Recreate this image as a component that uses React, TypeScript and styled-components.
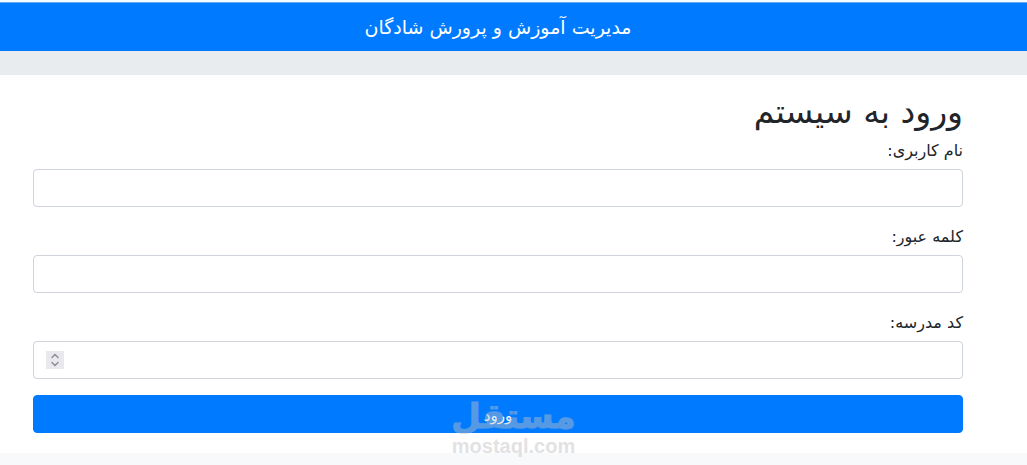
import React from "react";
import styled, { createGlobalStyle } from "styled-components";

const GlobalStyle = createGlobalStyle`
  *, *::before, *::after { box-sizing: border-box; }
  body {
    margin: 0;
    background: #f8f9fa;
    color: #212529;
    font-family: Tahoma, "DejaVu Sans", sans-serif;
    font-size: 16px;
    line-height: 24px;
  }
`;

const Page = styled.div`
  direction: rtl;
  padding-bottom: 12px;
  border-top: 2px solid #f4fcff;
`;

const Header = styled.header`
  display: flex;
  justify-content: center;
  padding: 9px 64px 9px 33px;
  border-top: 1px solid #5fa8f0;
  background: #007bff;
`;

const Brand = styled.a`
  color: #fff;
  font-size: 19px;
  line-height: 30px;
  text-decoration: none;
`;

const Strip = styled.div`
  height: 24px;
  background: #e9ecef;
`;

const Main = styled.main`
  position: relative;
  padding: 18px 64px 20px 33px;
  background: #fff;
`;

const Title = styled.h2`
  margin: 0 0 8px;
  font-size: 33px;
  font-weight: 400;
  line-height: 38px;
`;

const Field = styled.div`
  margin-bottom: 18px;

  &:last-of-type {
    margin-bottom: 16px;
  }
`;

const Label = styled.label`
  display: block;
  width: fit-content;
  margin-bottom: 6px;
`;

const Control = styled.div`
  position: relative;
`;

const Input = styled.input`
  display: block;
  width: 100%;
  height: 38px;
  padding: 6px 12px;
  border: 1px solid #ced4da;
  border-radius: 4px;
  background: #fff;
  color: #495057;
  font: inherit;
  appearance: textfield;

  &::-webkit-inner-spin-button,
  &::-webkit-outer-spin-button {
    appearance: none;
    margin: 0;
  }
`;

const Spinner = styled.svg`
  position: absolute;
  top: 10px;
  left: 13px;
  width: 18px;
  height: 18px;
  background: #e9e9ed;
  pointer-events: none;
`;

const Submit = styled.button`
  display: block;
  width: 100%;
  height: 38px;
  padding: 8px 12px 4px;
  border: 1px solid #007bff;
  border-radius: 4px;
  background: #007bff;
  color: #fff;
  font: inherit;
  font-size: 15px;
  cursor: pointer;
`;

const Watermark = styled.div`
  position: absolute;
  z-index: 1;
  right: 0;
  bottom: -6px;
  left: 0;
  color: #c0c0c4;
  opacity: 0.45;
  text-align: center;
  pointer-events: none;
`;

const WatermarkName = styled.div`
  font-family: "DejaVu Sans", sans-serif;
  font-size: 34px;
  font-weight: 700;
  line-height: 34px;
  -webkit-text-stroke: 1px #c0c0c4;
`;

const WatermarkDomain = styled.div`
  direction: ltr;
  font-family: "Liberation Sans", Arial, sans-serif;
  font-size: 20px;
  font-weight: 700;
  line-height: 26px;
`;

function SpinnerIcon() {
  return (
    <Spinner viewBox="0 0 18 18" fill="none" stroke="#8f8f9d" strokeWidth="1.5" strokeLinecap="round" strokeLinejoin="round" aria-hidden="true">
      <path d="M6 6.5 9 3.5l3 3M6 11.5l3 3 3-3" />
    </Spinner>
  );
}

const fields = [
  { id: "username", label: "نام کاربری:", type: "text" },
  { id: "password", label: "کلمه عبور:", type: "password" },
  { id: "school", label: "کد مدرسه:", type: "number" },
];

export default function App() {
  return (
    <Page lang="fa">
      <GlobalStyle />
      <Header>
        <Brand href="#">مدیریت آموزش و پرورش شادگان</Brand>
      </Header>
      <Strip />
      <Main>
        <Title>ورود به سیستم</Title>
        <form onSubmit={(e) => e.preventDefault()}>
          {fields.map((f) => (
            <Field key={f.id}>
              <Label htmlFor={f.id}>{f.label}</Label>
              <Control>
                <Input id={f.id} name={f.id} type={f.type} />
                {f.type === "number" && <SpinnerIcon />}
              </Control>
            </Field>
          ))}
          <Submit type="submit">ورود</Submit>
        </form>
        <Watermark aria-hidden="true">
          <WatermarkName>مستقل</WatermarkName>
          <WatermarkDomain>mostaql.com</WatermarkDomain>
        </Watermark>
      </Main>
    </Page>
  );
}
